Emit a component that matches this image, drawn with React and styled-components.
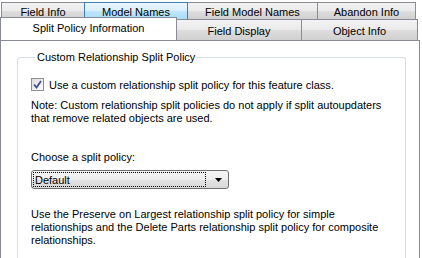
import styled, { createGlobalStyle } from "styled-components";

const GlobalStyle = createGlobalStyle`
  html, body {
    margin: 0;
    padding: 0;
    background: #ffffff;
  }
  body {
    font-family: "Liberation Sans", Arial, sans-serif;
    font-size: 11px;
    color: #000000;
  }
`;

const Window = styled.div`
  width: 422px;
  height: 258px;
  overflow: hidden;
  display: flex;
  flex-direction: column;
  background: #ffffff;
`;

const TabRow = styled.div`
  display: flex;
  padding-left: ${(p) => p.$indent}px;
  margin-top: ${(p) => p.$top}px;
  position: relative;
  z-index: ${(p) => p.$layer};
`;

const Tab = styled.div`
  width: ${(p) => p.$w}px;
  height: ${(p) => p.$h}px;
  box-sizing: border-box;
  display: flex;
  align-items: center;
  justify-content: center;
  border: 1px solid ${(p) => (p.$hover ? "#3c7fb1" : "#898c95")};
  border-bottom: none;
  margin-right: -1px;
  background: ${(p) =>
    p.$hover
      ? "linear-gradient(#eaf6fd 0%, #d9f0fc 45%, #bee6fd 50%, #a7d9f5 100%)"
      : "linear-gradient(#f2f2f2 0%, #ebebeb 45%, #dddddd 50%, #cfcfcf 100%)"};
  position: relative;
  z-index: ${(p) => (p.$hover ? 2 : 1)};
  padding-top: 1px;
  white-space: nowrap;
`;

const ActiveTab = styled.div`
  width: ${(p) => p.$w}px;
  height: 24px;
  margin-top: -2px;
  margin-right: -1px;
  box-sizing: border-box;
  border: 1px solid #898c95;
  border-bottom: none;
  background: #ffffff;
  display: flex;
  justify-content: center;
  padding-top: 4px;
  position: relative;
  z-index: 3;
`;

const Panel = styled.div`
  width: 420px;
  flex: 1;
  box-sizing: border-box;
  border: 1px solid #898c95;
  border-bottom: none;
  margin-top: -1px;
  background: #ffffff;
  padding: 10px 13px 0 16px;
  position: relative;
  z-index: 2;
`;

const GroupBox = styled.fieldset`
  margin: 0;
  border: 1px solid #d5dfe5;
  border-bottom: none;
  border-radius: 3px 3px 0 0;
  padding: 6px 12px 0 13px;
  height: 260px;
  box-sizing: border-box;
  min-width: 0;
`;

const Legend = styled.legend`
  padding: 0 2px;
  margin-left: 4px;
  font-size: 11px;
`;

const CheckRow = styled.label`
  display: flex;
  align-items: center;
  gap: 5px;
  margin-top: 9px;
`;

const Box = styled.span`
  width: 13px;
  height: 13px;
  box-sizing: border-box;
  border: 1px solid #8e8f8f;
  background: linear-gradient(135deg, #dcdcdc, #ffffff);
  display: flex;
  align-items: center;
  justify-content: center;
`;

const Text = styled.p`
  margin: ${(p) => p.$mt}px 0 0 0;
  line-height: 13px;
`;

const Combo = styled.div`
  width: 198px;
  height: 19px;
  margin-top: 6px;
  box-sizing: border-box;
  border: 1px solid #707070;
  border-radius: 3px;
  background: linear-gradient(#f4f4f4 0%, #eeeeee 50%, #e3e3e3 51%, #d9d9d9 100%);
  display: flex;
  align-items: center;
  padding: 0 6px 0 2px;
`;

const ComboValue = styled.div`
  flex: 1;
  height: 13px;
  outline: 1px dotted #000000;
  display: flex;
  align-items: center;
  padding-left: 1px;
  margin-right: 10px;
`;

const Arrow = styled.svg`
  width: 7px;
  height: 4px;
`;

export default function App() {
  return (
    <Window>
      <GlobalStyle />
      <TabRow $indent={1} $top={2} $layer={1}>
        <Tab $w={84} $h={18}>Field Info</Tab>
        <Tab $w={104} $h={18} $hover>Model Names</Tab>
        <Tab $w={131} $h={18}>Field Model Names</Tab>
        <Tab $w={99} $h={18}>Abandon Info</Tab>
      </TabRow>
      <TabRow $indent={0} $top={-1} $layer={2}>
        <ActiveTab $w={177}>Split Policy Information</ActiveTab>
        <Tab $w={126} $h={22}>Field Display</Tab>
        <Tab $w={117} $h={22}>Object Info</Tab>
      </TabRow>
      <Panel>
        <GroupBox>
          <Legend>Custom Relationship Split Policy</Legend>
          <CheckRow>
            <Box>
              <svg width="9" height="9" viewBox="0 0 9 9">
                <path d="M1 4.5 L3.5 7.5 L8 1" fill="none" stroke="#3d4f8e" strokeWidth="1.8" />
              </svg>
            </Box>
            Use a custom relationship split policy for this feature class.
          </CheckRow>
          <Text $mt={8}>
            Note: Custom relationship split policies do not apply if split autoupdaters
            <br />
            that remove related objects are used.
          </Text>
          <Text $mt={26}>Choose a split policy:</Text>
          <Combo>
            <ComboValue>Default</ComboValue>
            <Arrow viewBox="0 0 7 4">
              <path d="M0 0 H7 L3.5 4 Z" fill="#000000" />
            </Arrow>
          </Combo>
          <Text $mt={19}>
            Use the Preserve on Largest relationship split policy for simple
            <br />
            relationships and the Delete Parts relationship split policy for composite
            <br />
            relationships.
          </Text>
        </GroupBox>
      </Panel>
    </Window>
  );
}
